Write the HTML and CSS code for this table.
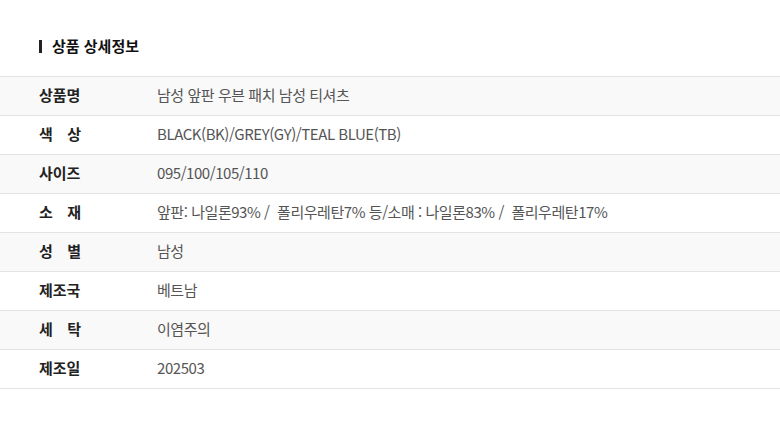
FILE: index.html
```html
<!DOCTYPE html>
<html lang="ko">
<head>
<meta charset="utf-8">
<link rel="stylesheet" href="styles.css">
</head>
<body>
<section class="detail">
  <h2 class="title">상품 상세정보</h2>
  <div class="table">
    <div class="row alt"><div class="label"><span>상품명</span></div><div class="value">남성 앞판 우븐 패치 남성 티셔츠</div></div>
    <div class="row"><div class="label"><span>색 상</span></div><div class="value">BLACK(BK)/GREY(GY)/TEAL BLUE(TB)</div></div>
    <div class="row alt"><div class="label"><span>사이즈</span></div><div class="value">095/100/105/110</div></div>
    <div class="row"><div class="label"><span>소 재</span></div><div class="value">앞판: 나일론93% /&nbsp; 폴리우레탄7% 등/소매 : 나일론83% /&nbsp; 폴리우레탄17%</div></div>
    <div class="row alt"><div class="label"><span>성 별</span></div><div class="value">남성</div></div>
    <div class="row"><div class="label"><span>제조국</span></div><div class="value">베트남</div></div>
    <div class="row alt"><div class="label"><span>세 탁</span></div><div class="value">이염주의</div></div>
    <div class="row"><div class="label"><span>제조일</span></div><div class="value">202503</div></div>
  </div>
</section>
</body>
</html>
```
FILE: styles.css
```css
html, body {
  margin: 0;
  padding: 0;
  background: #fff;
}
body {
  font-family: "Noto Sans CJK KR", "Noto Sans", sans-serif;
  color: #222;
}
.detail {
  padding-top: 36px;
}
.title {
  margin: 0 0 20px 0;
  padding-left: 39px;
  display: flex;
  align-items: center;
  gap: 10px;
  font-size: 15px;
  font-weight: 700;
  line-height: 20px;
  color: #111;
}
.title::before {
  content: "";
  width: 3px;
  height: 13px;
  background: #222;
}
.table {
  border-top: 1px solid #e4e4e4;
}
.row {
  display: flex;
  align-items: center;
  height: 38px;
  padding-bottom: 3px;
  box-sizing: border-box;
  min-height: 39px;
  border-bottom: 1px solid #e4e4e4;
  background: #fff;
}
.row.alt {
  background: #f9f9f9;
}
.label {
  width: 118px;
  padding-left: 39px;
  flex: none;
  font-size: 15px;
  font-weight: 700;
  line-height: 20px;
  color: #222;
}
.label span {
  display: inline-block;
  width: 42px;
  text-align: justify;
  text-align-last: justify;
}
.value {
  font-size: 15px;
  line-height: 20px;
  color: #555;
  letter-spacing: -0.45px;
}
```
